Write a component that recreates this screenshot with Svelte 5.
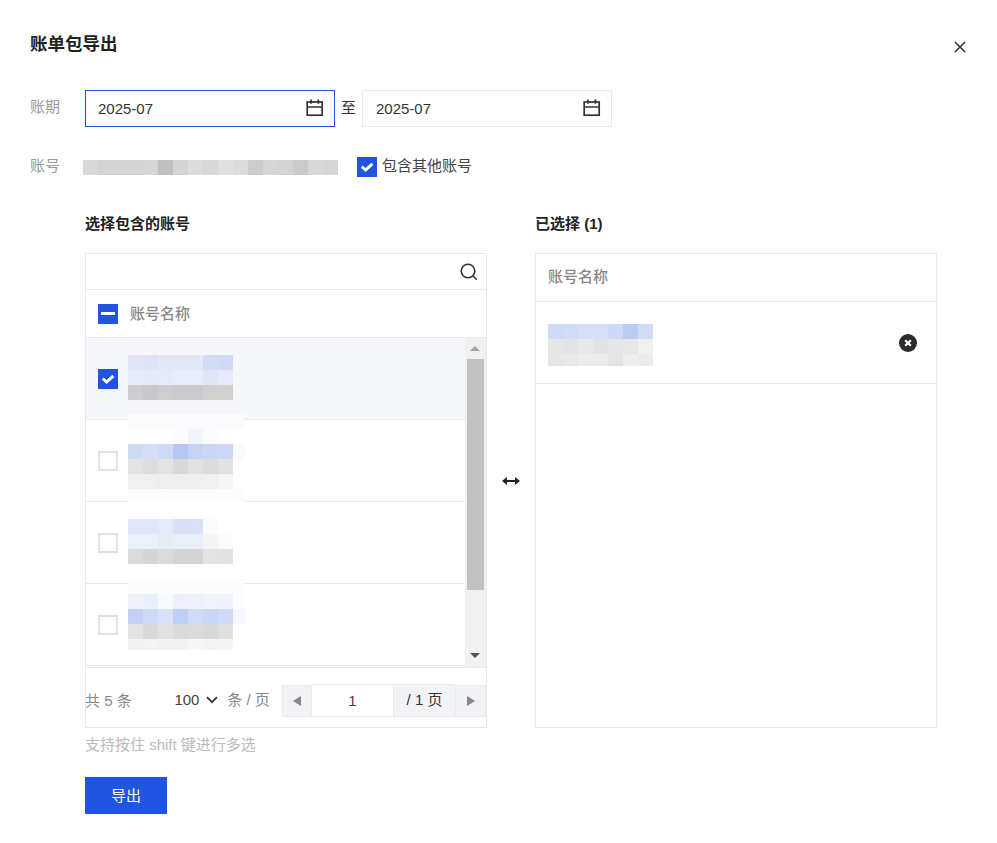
<script>
  const top = ['d8d8d8','d4d4d4','d4d4d4','d4d4d4','d6d6d6','c0c0c0','d4d4d4','dcdcdc','d8d8d8','e0e0e0','dcdcdc','cccccc','d6d6d6','d4d4d4','cbcbcb','d8d8d8','d6d6d6'];
  const rows = [
    { checked: true, offset: 17, cols: 7, width: 105, cells: [
      'e1e6f6','dee3f6','e3e8f7','e3e8f7','e3e8f7','d2dcf5','cfdaf5',
      'e6ebf8','e4e9f7','e6eaf8','e8ecf8','e8ecf8','dfe5f6','e6eaf7',
      'cdcdcf','c8c8ca','cecece','cbcbcd','cbcbcd','d0d0d1','d1d1d2'] },
    { checked: false, offset: -6, cols: 8, width: 117, cells: [
      'fbfbfd','fbfbfd','fbfbfd','fbfbfd','fbfbfd','fbfbfd','fbfbfd','fbfbfd',
      'ffffff','ffffff','ffffff','fcfcfe','f2f5fe','fbfcff','fefefe','ffffff',
      'cfdaf7','d5def8','d0daf6','b7c8f2','c6d3f5','ccd7f5','cdd8f6','fbfbfd',
      'e3e3e3','dddddd','e3e3e3','d9d9d9','e1e1e1','dcdcdc','e2e2e2','ffffff',
      'f0f0f0','f0f0f0','eeeeee','efefef','efefef','f0f0f0','f6f6f6','ffffff',
      'fcfcfc','fcfcfc','fcfcfc','fcfcfc','fcfcfc','fcfcfc','fcfcfc','fcfcfc'], clip: 88 },
    { checked: false, offset: 17, cols: 7, width: 105, cells: [
      'e1e7fa','e1e7fa','e4eaf8','d8e0f8','d9e1f9','fafbfe','ffffff',
      'ecf0f8','ecf0f8','e7ebf5','eaeef7','eaeef7','f5f5f5','fcfcfc',
      'dbdbdb','d5d5d5','dbdbdb','d4d4d4','d4d4d4','e3e3e3','e2e2e2'] },
    { checked: false, offset: -5, cols: 8, width: 117, cells: [
      'fcfcfc','fcfcfc','fcfcfc','fcfcfc','fcfcfc','fcfcfc','fcfcfc','fcfcfc',
      'ecf1fc','eaeffc','f7f9fe','ebf0fc','edf1fc','f1f4fd','f0f3fd','fbfcff',
      'c2d1f5','cfdaf7','d9e0f8','bfcff5','d2dbf6','cbd7f6','cfdaf7','f5f7fe',
      'e3e3e3','d9d9d9','e1e1e1','dadada','dbdbdb','d8d8d8','dfdfdf','ffffff',
      'f2f2f2','f4f4f4','f2f2f2','f2f2f2','f7f7f7','f4f4f4','f5f5f5','ffffff'], clip: 71 }
  ];
  const picked = [
    'cfdaf7','d3dcf7','d7dff8','d7dff8','cfd9f7','bccbf2','d0dbf7',
    'e5e5e5','e3e3e3','e8e8e8','e2e2e2','e6e6e6','e7e7e7','f0f0f0',
    'e6e6e6','e8e8e8','ececec','ececec','e4e4e4','eeeeee','ececec'
  ];
</script>

{#snippet calendar()}
  <svg class="cal" width="18" height="18" viewBox="0 0 18 18" fill="none" stroke="#333" stroke-width="1.7">
    <rect x="1.2" y="3" width="15" height="13.2" />
    <path d="M1.2 8h15M5 .4v4.4M12.4 .4v4.4" />
  </svg>
{/snippet}

{#snippet tick()}
  <svg width="20" height="20" viewBox="0 0 20 20" fill="none" stroke="#fff" stroke-width="3">
    <path d="M4.8 9.6l3.8 3.4 6.8-6.2" />
  </svg>
{/snippet}

<div class="dialog">
  <h1>账单包导出</h1>
  <button class="close" aria-label="关闭">
    <svg width="12" height="12" viewBox="0 0 12 12" stroke="#333" stroke-width="1.6" fill="none">
      <path d="M1 1l10 10M11 1L1 11" />
    </svg>
  </button>

  <div class="period">
    <span class="label">账期</span>
    <div class="date active"><span>2025-07</span>{@render calendar()}</div>
    <span class="to">至</span>
    <div class="date"><span>2025-07</span>{@render calendar()}</div>
  </div>

  <div class="account">
    <span class="label short">账号</span>
    <div class="strip">
      {#each top as c}<i style="background:#{c}"></i>{/each}
    </div>
    <span class="box on">{@render tick()}</span>
    <span class="inc">包含其他账号</span>
  </div>

  <div class="transfer">
    <div class="head">选择包含的账号</div>
    <div></div>
    <div class="head">已选择 (1)</div>

    <div class="panel">
      <div class="search">
        <svg width="18" height="18" viewBox="0 0 18 18" fill="none" stroke="#333" stroke-width="1.6">
          <circle cx="8" cy="8" r="6.8" /><path d="M12.8 12.8l4 4" />
        </svg>
      </div>
      <div class="thead">
        <span class="box on"><b></b></span>
        <span class="th">账号名称</span>
      </div>
      <div class="scrollwrap">
        <div class="list">
          {#each rows as r}
            <div class="row" class:sel={r.checked}>
              {#if r.checked}
                <span class="box on">{@render tick()}</span>
              {:else}
                <span class="box"></span>
              {/if}
              <div class="mosaic" style="top:{r.offset}px;width:{r.width}px;grid-template-columns:repeat({r.cols},15px);{r.clip ? `height:${r.clip}px` : ''}">
                {#each r.cells as c}<i style="background:#{c}"></i>{/each}
              </div>
            </div>
          {/each}
        </div>
        <div class="bar">
          <span class="up"></span>
          <span class="thumb"></span>
          <span class="down"></span>
        </div>
      </div>
      <div class="pager">
        <span class="total">共 5 条</span>
        <span class="size">100</span>
        <svg class="chev" width="12" height="8" viewBox="0 0 12 8" fill="none" stroke="#333" stroke-width="1.7">
          <path d="M1 1.2l5 5 5-5" />
        </svg>
        <span class="per">条 / 页</span>
        <div class="nav">
          <span class="pbtn first"><em class="tl"></em></span>
          <span class="pinput">1</span>
          <span class="pcount">/ 1 页</span>
          <span class="pbtn"><em class="tr"></em></span>
        </div>
      </div>
    </div>

    <div class="swap">
      <svg width="18" height="8" viewBox="0 0 18 8" fill="#222">
        <path d="M0 4l5-4v3h8V0l5 4-5 4V5H5v3z" />
      </svg>
    </div>

    <div class="panel">
      <div class="rhead"><span class="th">账号名称</span></div>
      <div class="rrow">
        <div class="pickmosaic">
          {#each picked as c}<i style="background:#{c}"></i>{/each}
        </div>
        <svg class="rm" width="18" height="18" viewBox="0 0 18 18">
          <circle cx="9" cy="9" r="9" fill="#2b2b2b" />
          <path d="M6.2 6.2l5.6 5.6M11.8 6.2l-5.6 5.6" stroke="#fff" stroke-width="2.2" />
        </svg>
      </div>
    </div>
  </div>

  <p class="hint">支持按住 shift 键进行多选</p>
  <button class="primary">导出</button>
</div>

<style>
  :global(body) {
    margin: 0;
    background: #fff;
  }
  .dialog {
    position: relative;
    box-sizing: border-box;
    width: 997px;
    height: 843px;
    padding: 30px 60px 0 30px;
    font-family: "Liberation Sans", "Noto Sans CJK SC", sans-serif;
    font-size: 15px;
    color: #333;
  }
  h1 {
    margin: 0;
    font-size: 17.5px;
    line-height: 28px;
    font-weight: 700;
    color: #222;
  }
  .close {
    position: absolute;
    top: 41px;
    right: 31px;
    padding: 0;
    border: 0;
    background: none;
    display: flex;
  }
  .period {
    display: flex;
    align-items: center;
    margin-top: 32px;
    height: 37px;
  }
  .label {
    width: 55px;
    color: #999;
    padding-bottom: 7px;
  }
  .label.short {
    width: 53px;
    padding-bottom: 6px;
  }
  .date {
    box-sizing: border-box;
    width: 250px;
    height: 37px;
    border: 1px solid #e7e8f0;
    display: flex;
    align-items: center;
    justify-content: space-between;
    padding: 0 10px 0 13px;
    color: #333;
  }
  .date.active {
    border-color: #1f55e0;
    padding-left: 12px;
  }
  .cal {
    margin-top: -2px;
  }
  .to {
    width: 27px;
    text-align: center;
    color: #333;
    padding-bottom: 5px;
  }
  .account {
    display: flex;
    align-items: center;
    height: 20px;
    margin-top: 30px;
  }
  .strip {
    display: flex;
    width: 255px;
    height: 15px;
    margin-right: 19px;
  }
  .strip i {
    width: 15px;
    height: 15px;
  }
  .box {
    box-sizing: border-box;
    flex: none;
    width: 20px;
    height: 20px;
    display: flex;
    align-items: center;
    justify-content: center;
    border: 2px solid #dfe2ec;
    background: #fff;
  }
  .box.on {
    border: 0;
    background: #1f55e0;
  }
  .box b {
    width: 14px;
    height: 3px;
    background: #fff;
  }
  .inc {
    margin-left: 5px;
    color: #444;
    padding-bottom: 5px;
  }
  .transfer {
    display: grid;
    grid-template-columns: 402px 48px 402px;
    grid-template-rows: 20px 475px;
    row-gap: 19px;
    margin: 37px 0 0 55px;
  }
  .head {
    font-weight: 700;
    font-size: 15px;
    line-height: 20px;
    color: #222;
  }
  .panel {
    box-sizing: border-box;
    border: 1px solid #e7e8f0;
    display: flex;
    flex-direction: column;
    min-width: 0;
  }
  .search {
    box-sizing: border-box;
    height: 36px;
    flex: none;
    border-bottom: 1px solid #e7e8f0;
    display: flex;
    align-items: center;
    justify-content: flex-end;
    padding-right: 8px;
  }
  .thead {
    box-sizing: border-box;
    height: 48px;
    flex: none;
    display: flex;
    align-items: center;
    gap: 12px;
    padding-left: 12px;
    border-bottom: 1px solid #e7e8f0;
  }
  .thead .th {
    padding-bottom: 2px;
  }
  .th {
    color: #888;
    font-weight: 500;
  }
  .scrollwrap {
    display: flex;
    height: 329px;
    flex: none;
  }
  .list {
    width: 379px;
    flex: none;
  }
  .row {
    position: relative;
    box-sizing: border-box;
    height: 82px;
    display: flex;
    align-items: center;
    padding-left: 12px;
    border-bottom: 1px solid #e7e8f0;
  }
  .row.sel {
    background: #f6f7fb;
  }
  .mosaic {
    position: absolute;
    left: 42px;
    display: grid;
    grid-auto-rows: 15px;
    overflow: hidden;
  }
  .pickmosaic i {
    width: 15px;
    height: 15px;
    flex: none;
  }
  .bar {
    position: relative;
    flex: 1;
    display: flex;
    flex-direction: column;
    background: #f1f1f1;
  }
  .thumb {
    display: block;
    margin: 21px 2px 0 2px;
    height: 231px;
    background: #c1c1c1;
  }
  .up,
  .down {
    position: absolute;
    left: 5px;
    width: 0;
    height: 0;
    border-left: 5px solid transparent;
    border-right: 5px solid transparent;
  }
  .up {
    top: 8px;
    border-bottom: 5px solid #a3a3a3;
  }
  .down {
    bottom: 9px;
    border-top: 5px solid #505050;
  }
  .pager {
    flex: 1;
    display: flex;
    align-items: center;
    border-top: 1px solid #e7e8f0;
    color: #888;
    padding-top: 5px;
  }
  .total {
    width: 90px;
    margin-left: -1px;
    margin-bottom: 2px;
  }
  .size {
    color: #444;
    margin-bottom: 2px;
  }
  .chev {
    margin: 0 0 1px 7px;
  }
  .per {
    margin: 0 0 4px 9px;
    width: 55px;
    white-space: nowrap;
  }
  .nav {
    display: flex;
    align-items: center;
    height: 33px;
  }
  .pbtn {
    box-sizing: border-box;
    width: 31px;
    height: 32px;
    margin-top: 1px;
    background: #f2f3f7;
    border: 1px solid #e7e8f0;
    display: flex;
    align-items: center;
    justify-content: center;
  }
  .pbtn.first {
    width: 30px;
  }
  .pinput {
    box-sizing: border-box;
    width: 81px;
    height: 33px;
    border-top: 1px solid #e7e8f0;
    border-bottom: 1px solid #e7e8f0;
    text-align: center;
    line-height: 32px;
    color: #444;
  }
  .pcount {
    box-sizing: border-box;
    width: 62px;
    height: 33px;
    background: #f2f3f7;
    border: 1px solid #e7e8f0;
    border-right: 0;
    text-align: center;
    line-height: 29px;
    color: #333;
  }
  .tl,
  .tr {
    width: 0;
    height: 0;
    border-top: 5px solid transparent;
    border-bottom: 5px solid transparent;
  }
  .tl {
    border-right: 8px solid #888;
  }
  .tr {
    border-left: 8px solid #888;
  }
  .swap {
    display: flex;
    align-items: center;
    justify-content: center;
    padding-bottom: 19px;
  }
  .rhead {
    box-sizing: border-box;
    height: 48px;
    flex: none;
    display: flex;
    align-items: center;
    padding: 0 0 4px 12px;
    border-bottom: 1px solid #e7e8f0;
  }
  .rrow {
    box-sizing: border-box;
    height: 82px;
    flex: none;
    display: flex;
    align-items: center;
    justify-content: space-between;
    padding: 0 19px 0 12px;
    border-bottom: 1px solid #e7e8f0;
  }
  .pickmosaic {
    display: flex;
    flex-wrap: wrap;
    align-content: flex-start;
    width: 105px;
    height: 42px;
    margin-top: 4px;
    overflow: hidden;
  }
  .hint {
    margin: 7px 0 0 55px;
    line-height: 20px;
    font-size: 15px;
    color: #bbb;
  }
  .primary {
    display: block;
    margin: 22px 0 0 55px;
    width: 82px;
    height: 37px;
    border: 0;
    padding: 0 0 2px;
    background: #1f55e0;
    color: #fff;
    font: inherit;
  }
</style>
